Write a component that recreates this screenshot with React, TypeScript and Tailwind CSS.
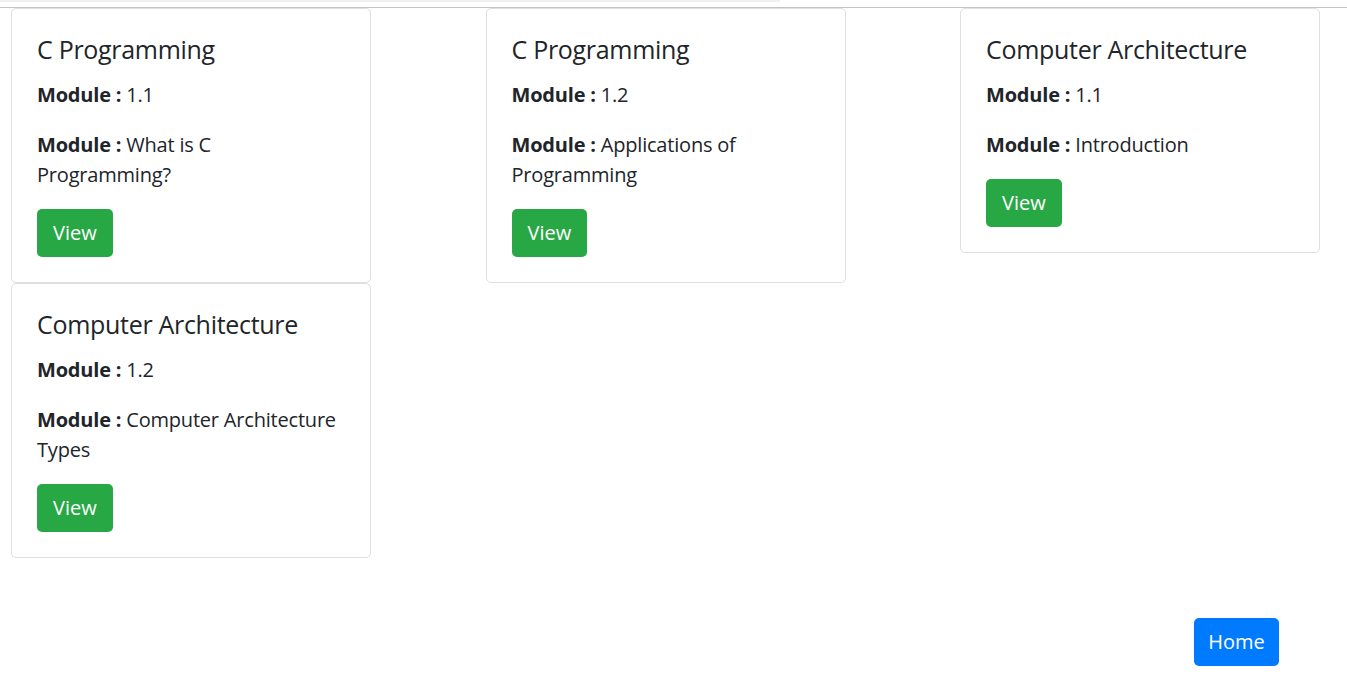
import React from "react";

type Card = { title: string; num: string; name: string };

const cards: Card[] = [
  { title: "C Programming", num: "1.1", name: "What is C Programming?" },
  { title: "C Programming", num: "1.2", name: "Applications of Programming" },
  { title: "Computer Architecture", num: "1.1", name: "Introduction" },
  { title: "Computer Architecture", num: "1.2", name: "Computer Architecture Types" },
];

function CardView({ c }: { c: Card }) {
  return (
    <div className="w-[360px] self-start rounded-[5px] border border-[#dfdfdf] bg-white px-[25px] pt-[25px] pb-[25px] text-[#212529]">
      <h5 className="mb-[16px] text-[25px] leading-[30px] font-normal tracking-[-0.3px]">{c.title}</h5>
      <p className="mb-[20px] text-[20px] leading-[30px] tracking-[-0.2px]">
        <b className="font-bold">Module :</b> {c.num}
      </p>
      <p className="mb-[19px] text-[20px] leading-[30px] tracking-[-0.2px]">
        <b className="font-bold">Module :</b> {c.name}
      </p>
      <button className="h-[48px] rounded-[5px] bg-[#28a745] px-[16px] text-[20px] leading-[30px] text-white">
        View
      </button>
    </div>
  );
}

export default function App() {
  return (
    <div
      className="min-h-[687px] bg-white"
      style={{ fontFamily: '"Open Sans", "Noto Sans", sans-serif' }}
    >
      <div className="h-[8px] border-b border-[#c4c4c4]">
        <div className="h-[2px] w-[780px] bg-[#f0f0f0]" />
      </div>
      <div className="flex flex-wrap justify-between pl-[11px] pr-[27px]">
        {cards.slice(0, 3).map((c, i) => (
          <CardView key={i} c={c} />
        ))}
      </div>
      <div className="flex pl-[11px]">
        <CardView c={cards[3]} />
      </div>
      <div className="mt-[60px] flex justify-end pr-[68px]">
        <button className="h-[48px] w-[85px] rounded-[5px] bg-[#007bff] text-[20px] leading-[30px] text-white">
          Home
        </button>
      </div>
    </div>
  );
}
